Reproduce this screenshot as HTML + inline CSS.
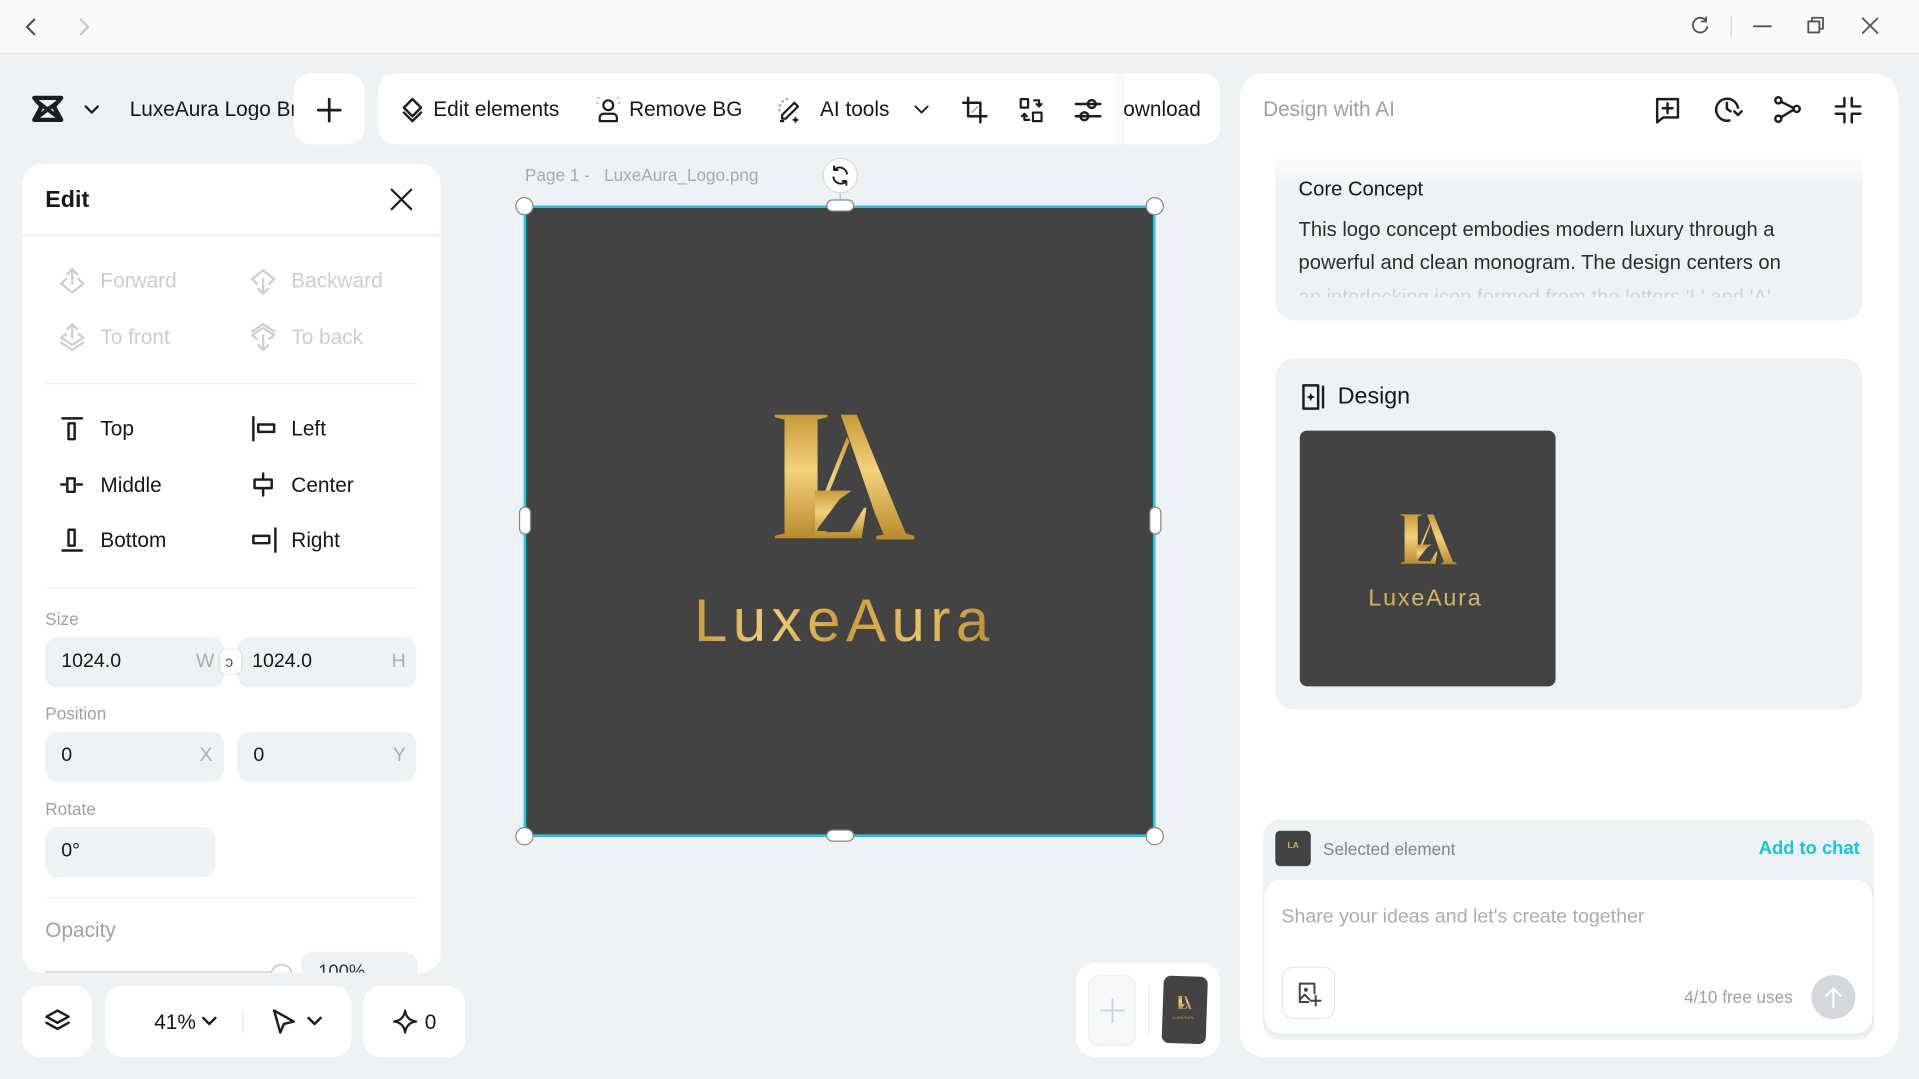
<!DOCTYPE html>
<html><head><meta charset="utf-8">
<style>
*{box-sizing:border-box;margin:0;padding:0}
html,body{width:1919px;height:1079px;overflow:hidden;background:#eef2f5;font-family:"Liberation Sans",sans-serif;color:#15171a}
#s{position:absolute;left:0;top:0;width:1568px;height:882px;transform:scale(1.2239,1.2234);transform-origin:0 0;background:#eef2f5}
.a{position:absolute}
.w{position:absolute;background:#fff}
.t{position:absolute;white-space:nowrap;line-height:1}
svg{position:absolute;overflow:visible}
.ic{fill:none;stroke:#1b1d20;stroke-width:1.8;stroke-linecap:round;stroke-linejoin:round}
.g{color:#c9ced4}
.inp{position:absolute;background:#eef2f5;border-radius:10px;height:41px}
.lbl{position:absolute;font-size:14px;color:#9aa1a9}
</style></head><body><div id="s">
<!-- title bar -->
<div class="a" style="left:0;top:0;width:1568px;height:44px;background:#f9f9fa;border-bottom:1px solid #e4e6e9"></div>
<svg style="left:19px;top:14px" width="14" height="16"><path class="ic" d="M9 2L3 8l6 6" style="stroke:#555"/></svg>
<svg style="left:62px;top:14px" width="14" height="16"><path class="ic" d="M4 2l6 6-6 6" style="stroke:#c7c9cc"/></svg>
<svg style="left:1381px;top:13px" width="16" height="16"><path class="ic" d="M13 4A6 6 0 1 0 14 9M13 1v3.5h-3.5" style="stroke:#555;stroke-width:1.5"/></svg>
<div class="a" style="left:1414px;top:13px;width:1px;height:17px;background:#d4d6d9"></div>
<svg style="left:1432px;top:20px" width="16" height="4"><path class="ic" d="M1 1.5h14" style="stroke:#555;stroke-width:1.5"/></svg>
<svg style="left:1476px;top:13px" width="16" height="16"><path class="ic" d="M1.5 4.5h9v9h-9zM4.5 4.5V1.5h9v9h-3" style="stroke:#555;stroke-width:1.5"/></svg>
<svg style="left:1521px;top:14px" width="14" height="14"><path class="ic" d="M1 1l12 12M13 1L1 13" style="stroke:#555;stroke-width:1.5"/></svg>

<!-- top left header -->
<div class="a" style="left:10px;top:60px;width:290px;height:58px;border-radius:14px;background:#eef2f5"></div>
<svg style="left:26px;top:78px" width="26" height="24"><path d="M2 2h22l-6 7 6 11H2l6-11z" fill="none" stroke="#1b1d20" stroke-width="3.5" stroke-linejoin="round"/><path d="M3 4l20 15M23 4L3 19" stroke="#1b1d20" stroke-width="3.2"/></svg>
<svg style="left:69px;top:86px" width="12" height="8"><path class="ic" d="M1 1l5 5 5-5"/></svg>
<div class="t" style="left:106px;top:81px;font-size:17px;width:134px;overflow:hidden">LuxeAura Logo Brand</div>
<div class="w" style="left:240px;top:60px;width:58px;height:58px;border-radius:14px"></div>
<svg style="left:259px;top:80px" width="20" height="20"><path class="ic" d="M10 1v18M1 10h18" style="stroke-width:2.2"/></svg>

<!-- toolbar -->
<div class="w" style="left:309px;top:60px;width:688px;height:58px;border-radius:14px"></div>
<svg style="left:327px;top:79px" width="20" height="22"><path class="ic" d="M10 2l7 7-7 7-7-7zM3 13l7 7 7-7" style="stroke-width:2"/></svg>
<div class="t" style="left:354px;top:81px;font-size:17px">Edit elements</div>
<svg style="left:487px;top:79px" width="20" height="22"><circle cx="10" cy="7" r="4" class="ic"/><path class="ic" d="M3 20v-3a3 3 0 0 1 3-3h8a3 3 0 0 1 3 3v3z"/><path d="M1 1h2M17 1h2M1 4v2M19 4v2" stroke="#bfc6ce" stroke-width="1.5"/></svg>
<div class="t" style="left:514px;top:81px;font-size:17px">Remove BG</div>
<svg style="left:633px;top:79px" width="22" height="22"><path d="M4 12a8 8 0 0 1 9-10" fill="none" stroke="#999" stroke-width="1.5" stroke-dasharray="2 2"/><path class="ic" d="M16 5l3 3-10 10H6v-3z M5 20l2 0"/><path d="M17 16l1 2 2 1-2 1-1 2-1-2-2-1 2-1z" fill="#1b1d20"/></svg>
<div class="t" style="left:670px;top:81px;font-size:17px">AI tools</div>
<svg style="left:747px;top:86px" width="12" height="8"><path class="ic" d="M1 1l5 5 5-5" style="stroke-width:1.5"/></svg>
<svg style="left:786px;top:79px" width="20" height="22"><path class="ic" d="M5 1v15h15M1 5h14v16" style="stroke-width:2"/><path d="M8 13l5-5" stroke="#999" stroke-width="1"/></svg>
<svg style="left:832px;top:79px" width="22" height="22"><path class="ic" d="M2 2h6v7H2zM12 13h7v7h-7zM13 3h4v5m-2-2l2 2 2-2M9 19H5v-5m-2 2l2-2 2 2" style="stroke-width:1.8"/></svg>
<svg style="left:877px;top:79px" width="24" height="22"><path class="ic" d="M2 6h20M2 16h20" style="stroke-width:2"/><circle cx="15" cy="6" r="3.2" fill="#fff" class="ic" style="stroke-width:2"/><circle cx="9" cy="16" r="3.2" fill="#fff" class="ic" style="stroke-width:2"/></svg>
<div class="a" style="left:908px;top:60px;width:10px;height:58px;background:linear-gradient(90deg,rgba(0,0,0,0),rgba(0,0,0,.03))"></div>
<div class="t" style="left:918px;top:81px;font-size:17px;width:63px;overflow:hidden;direction:rtl">Download</div>

<!-- edit panel -->
<div class="w" style="left:18px;top:134px;width:342px;height:661px;border-radius:16px;overflow:hidden">
 <div class="a" style="left:0;top:58px;width:342px;height:1px;background:#eceef1"></div>
 <div class="a" style="left:19px;top:179px;width:304px;height:1px;background:#eceef1"></div>
 <div class="a" style="left:19px;top:346px;width:304px;height:1px;background:#eceef1"></div>
 <div class="a" style="left:19px;top:599px;width:304px;height:1px;background:#eceef1"></div>
 <div class="a" style="left:19px;top:660px;width:194px;height:1.5px;background:#c9ced4"></div>
 <div class="a" style="left:203px;top:654px;width:18px;height:18px;border-radius:50%;border:1.5px solid #b9bec5;background:#fff"></div>
 <div class="a" style="left:228px;top:644px;width:95px;height:40px;border-radius:10px;background:#eef2f5"></div>
 <div class="t" style="left:242px;top:653px;font-size:15px;color:#333">100%</div>
</div>
<div class="t" style="left:37px;top:154px;font-size:19px;font-weight:bold">Edit</div>
<svg style="left:319px;top:154px" width="18" height="18"><path class="ic" d="M1 1l16 16M17 1L1 17"/></svg>

<svg style="left:49px;top:219px" width="20" height="22"><path class="ic" d="M10 1v12M6 5l4-4 4 4M5 9l-4 4 9 7 9-7-4-4" style="stroke:#c9ced4"/></svg>
<div class="t g" style="left:82px;top:221px;font-size:17px">Forward</div>
<svg style="left:205px;top:219px" width="20" height="22"><path class="ic" d="M10 9v12M6 17l4 4 4-4M5 13l-4-4 9-7 9 7-4 4" style="stroke:#c9ced4"/></svg>
<div class="t g" style="left:238px;top:221px;font-size:17px">Backward</div>
<svg style="left:49px;top:264px" width="20" height="22"><path class="ic" d="M10 1v11M6 5l4-4 4 4M5 9l-4 3 9 6 9-6-4-3M1 16l9 6 9-6" style="stroke:#c9ced4"/></svg>
<div class="t g" style="left:82px;top:267px;font-size:17px">To front</div>
<svg style="left:205px;top:264px" width="20" height="22"><path class="ic" d="M10 10v12M6 18l4 4 4-4M1 7l9-6 9 6M5 13l-4-3 9-6 9 6-4 3" style="stroke:#c9ced4"/></svg>
<div class="t g" style="left:238px;top:267px;font-size:17px">To back</div>

<svg style="left:50px;top:341px" width="20" height="20"><path class="ic" d="M1 1h16M6 5h5v13H6z" style="stroke-width:2"/></svg>
<div class="t" style="left:82px;top:342px;font-size:17px">Top</div>
<svg style="left:49px;top:387px" width="20" height="20"><path class="ic" d="M1 9h4M14 9h4M6 4h6v11H6z" style="stroke-width:2"/></svg>
<div class="t" style="left:82px;top:388px;font-size:17px">Middle</div>
<svg style="left:50px;top:432px" width="20" height="20"><path class="ic" d="M1 18h16M6 1h5v13H6z" style="stroke-width:2"/></svg>
<div class="t" style="left:82px;top:433px;font-size:17px">Bottom</div>
<svg style="left:205px;top:340px" width="22" height="22"><path class="ic" d="M2 1v19M6 7h13v6H6z" style="stroke-width:2"/></svg>
<div class="t" style="left:238px;top:342px;font-size:17px">Left</div>
<svg style="left:205px;top:386px" width="22" height="22"><path class="ic" d="M10 1v5M10 14v5M3 6h14v7H3z" style="stroke-width:2"/></svg>
<div class="t" style="left:238px;top:388px;font-size:17px">Center</div>
<svg style="left:205px;top:431px" width="22" height="22"><path class="ic" d="M20 1v19M2 7h13v6H2z" style="stroke-width:2"/></svg>
<div class="t" style="left:238px;top:433px;font-size:17px">Right</div>

<div class="lbl" style="left:37px;top:498px">Size</div>
<div class="inp" style="left:37px;top:521px;width:146px"></div>
<div class="t" style="left:50px;top:533px;font-size:16px">1024.0</div>
<div class="t" style="left:160px;top:533px;font-size:16px;color:#a9afb6">W</div>
<div class="inp" style="left:194px;top:521px;width:146px"></div>
<div class="t" style="left:206px;top:533px;font-size:16px">1024.0</div>
<div class="t" style="left:320px;top:533px;font-size:16px;color:#a9afb6">H</div>
<div class="a" style="left:180px;top:531px;width:17px;height:20px;background:#fff;border-radius:5px;box-shadow:0 0 2px rgba(0,0,0,.15)"></div>
<div class="t" style="left:184px;top:534px;font-size:13px;color:#555">ᴐ</div>
<div class="lbl" style="left:37px;top:575px">Position</div>
<div class="inp" style="left:37px;top:598px;width:146px"></div>
<div class="t" style="left:50px;top:610px;font-size:16px">0</div>
<div class="t" style="left:163px;top:610px;font-size:16px;color:#a9afb6">X</div>
<div class="inp" style="left:194px;top:598px;width:146px"></div>
<div class="t" style="left:207px;top:610px;font-size:16px">0</div>
<div class="t" style="left:321px;top:610px;font-size:16px;color:#a9afb6">Y</div>
<div class="lbl" style="left:37px;top:653px">Rotate</div>
<div class="inp" style="left:37px;top:676px;width:139px"></div>
<div class="t" style="left:50px;top:688px;font-size:16px">0°</div>
<div class="t" style="left:37px;top:752px;font-size:17px;color:#9aa1a9">Opacity</div>

<!-- bottom left bar -->
<div class="w" style="left:18px;top:806px;width:57px;height:58px;border-radius:14px"></div>
<svg style="left:36px;top:825px" width="22" height="20"><path class="ic" d="M11 1l9 5-9 5-9-5zM2 11l9 5 9-5" style="stroke-width:2"/></svg>
<div class="w" style="left:86px;top:806px;width:201px;height:58px;border-radius:14px"></div>
<div class="t" style="left:126px;top:827px;font-size:17px">41%</div>
<svg style="left:165px;top:831px" width="12" height="8"><path class="ic" d="M1 1l5 5 5-5" style="stroke-width:2"/></svg>
<div class="a" style="left:198px;top:826px;width:1px;height:18px;background:#e4e6e9"></div>
<svg style="left:222px;top:824px" width="20" height="22"><path class="ic" d="M2 2l16 9-8 2-3 7z" style="stroke-width:2"/></svg>
<svg style="left:251px;top:831px" width="12" height="8"><path class="ic" d="M1 1l5 5 5-5" style="stroke-width:2"/></svg>
<div class="w" style="left:297px;top:806px;width:83px;height:58px;border-radius:14px"></div>
<svg style="left:321px;top:825px" width="20" height="20"><path d="M10 1Q11 9 19 10Q11 11 10 19Q9 11 1 10Q9 9 10 1z" class="ic" style="stroke-width:1.8"/></svg>
<div class="t" style="left:347px;top:827px;font-size:17px">0</div>

<!-- canvas -->
<div class="t" style="left:429px;top:136px;font-size:14px;color:#a5abb2">Page 1 -&nbsp;&nbsp; LuxeAura_Logo.png</div>
<div class="a" style="left:672px;top:129px;width:29px;height:29px;border-radius:50%;background:#fff;border:1.5px solid #d8dce0"></div>
<svg style="left:678px;top:135px" width="17" height="17"><path class="ic" d="M14 7a6 6 0 0 0-10.5-3M3 10a6 6 0 0 0 10.5 3M3.5 1v3h3M13.5 16v-3h-3" style="stroke-width:1.6"/></svg>
<div class="a" style="left:686px;top:158px;width:1px;height:10px;background:#b9bec5"></div>
<div class="a" style="left:428px;top:168px;width:516px;height:516px;background:#434343;border:2px solid #1ec8e2"></div>
<svg style="left:632px;top:339px" width="115" height="103" viewBox="0 0 115 103">
<defs><linearGradient id="gd" x1="0" y1="0" x2="0" y2="1"><stop offset="0" stop-color="#c99a3a"/><stop offset=".45" stop-color="#f2d27a"/><stop offset="1" stop-color="#b98a2e"/></linearGradient></defs>
<g fill="url(#gd)">
<path d="M1 0h43v2l-8 2v91h8l-8 6H1v-2l8-2V4l-8-2z"/>
<path d="M55 0h13l40 97 7 2v3H84v-3l6-1-7-17z"/>
<path d="M60 18l2 4-29 73h-4z"/>
<path d="M34 62h30l-10 7-20 27h28l12-20h2l-4 25H34z"/>
</g></svg>
<div class="t" style="left:567px;top:484px;font-size:49px;letter-spacing:4.5px;background:linear-gradient(90deg,#c99a3a,#f0cf78,#c99a3a,#e7c36a,#b98a2e);-webkit-background-clip:text;background-clip:text;color:transparent">LuxeAura</div>
<!-- handles -->
<div class="a" style="left:421px;top:161px;width:15px;height:15px;border-radius:50%;background:#fff;border:1.5px solid #888"></div>
<div class="a" style="left:936px;top:161px;width:15px;height:15px;border-radius:50%;background:#fff;border:1.5px solid #888"></div>
<div class="a" style="left:421px;top:676px;width:15px;height:15px;border-radius:50%;background:#fff;border:1.5px solid #888"></div>
<div class="a" style="left:936px;top:676px;width:15px;height:15px;border-radius:50%;background:#fff;border:1.5px solid #888"></div>
<div class="a" style="left:675px;top:163px;width:23px;height:10px;border-radius:5px;background:#fff;border:1.5px solid #888"></div>
<div class="a" style="left:675px;top:678px;width:23px;height:10px;border-radius:5px;background:#fff;border:1.5px solid #888"></div>
<div class="a" style="left:424px;top:414px;width:10px;height:23px;border-radius:5px;background:#fff;border:1.5px solid #888"></div>
<div class="a" style="left:939px;top:414px;width:10px;height:23px;border-radius:5px;background:#fff;border:1.5px solid #888"></div>

<!-- pages widget -->
<div class="w" style="left:879px;top:787px;width:118px;height:77px;border-radius:16px"></div>
<div class="a" style="left:889px;top:797px;width:39px;height:58px;border-radius:9px;background:#f6f8fa;border:1px solid #eceef1"></div>
<svg style="left:898px;top:815px" width="22" height="22"><path d="M11 1v20M1 11h20" stroke="#ced3d8" stroke-width="1.5"/></svg>
<div class="a" style="left:938px;top:805px;width:1px;height:40px;background:#eceef1"></div>
<div class="a" style="left:950px;top:798px;width:36px;height:55px;border-radius:6px;background:#434343;transform:rotate(2deg)"></div>
<svg style="left:962px;top:814px" width="12" height="11" viewBox="0 0 115 103"><g fill="url(#gd)"><path d="M1 0h43v2l-8 2v91h8l-8 6H1v-2l8-2V4l-8-2z"/><path d="M55 0h13l40 97 7 2v3H84v-3l6-1-7-17z"/><path d="M34 62h30l-10 7-20 27h28l12-20h2l-4 25H34z"/></g></svg>
<div class="t" style="left:958px;top:830px;font-size:4px;color:#b8943f">LuxeAura</div>

<!-- right panel -->
<div class="w" style="left:1013px;top:60px;width:538px;height:804px;border-radius:20px"></div>
<div class="t" style="left:1032px;top:81px;font-size:17px;color:#9aa1a9">Design with AI</div>
<svg style="left:1351px;top:78px" width="24" height="24"><path class="ic" d="M3 3h17v15H8l-5 4zM11.5 6.5v8M7.5 10.5h8" style="stroke-width:2"/></svg>
<svg style="left:1400px;top:78px" width="24" height="24"><path class="ic" d="M20 10A9 9 0 1 0 13 20.5M11 6v5l3 2M17 13l3 3 3-3" style="stroke-width:2"/></svg>
<svg style="left:1449px;top:78px" width="24" height="24"><circle cx="4" cy="4" r="2.5" class="ic" style="stroke-width:2"/><circle cx="4" cy="19" r="2.5" class="ic" style="stroke-width:2"/><circle cx="19" cy="11" r="2.5" class="ic" style="stroke-width:2"/><path class="ic" d="M6 5l10 5M6 18l10-6" style="stroke-width:2"/></svg>
<svg style="left:1499px;top:79px" width="22" height="22"><path class="ic" d="M8 1v7H1M14 1v7h7M8 21v-7H1M14 21v-7h7" style="stroke-width:2"/></svg>

<div class="a" style="left:1042px;top:125px;width:480px;height:137px;border-radius:0 0 16px 16px;background:linear-gradient(180deg,#fff 0,#eef2f5 30px,#eef2f5 100%)"></div>
<div class="t" style="left:1061px;top:147px;font-size:16.5px">Core Concept</div>
<div class="t" style="left:1061px;top:180px;font-size:16.5px;color:#2a2d31">This logo concept embodies modern luxury through a</div>
<div class="t" style="left:1061px;top:207px;font-size:16.5px;color:#2a2d31">powerful and clean monogram. The design centers on</div>
<div class="a" style="left:1042px;top:234px;width:480px;height:9px;overflow:hidden"><div class="t" style="left:19px;top:1px;font-size:16.5px;color:#cfd4d9">an interlocking icon formed from the letters 'L' and 'A'</div></div>

<div class="a" style="left:1042px;top:293px;width:480px;height:287px;border-radius:16px;background:#eef2f5"></div>
<svg style="left:1063px;top:314px" width="22" height="22"><path class="ic" d="M2 1h12v19H2zM18 2v17" style="stroke-width:2"/><path d="M8 7l1 2.5 2.5 1L9 11.5 8 14l-1-2.5L4.5 10.5 7 9.5z" fill="#1b1d20"/></svg>
<div class="t" style="left:1093px;top:315px;font-size:19px">Design</div>
<div class="a" style="left:1062px;top:352px;width:209px;height:209px;border-radius:6px;background:#434343"></div>
<svg style="left:1144px;top:420px" width="46" height="42" viewBox="0 0 115 103"><g fill="url(#gd)">
<path d="M1 0h43v2l-8 2v91h8l-8 6H1v-2l8-2V4l-8-2z"/><path d="M55 0h13l40 97 7 2v3H84v-3l6-1-7-17z"/><path d="M60 18l2 4-29 73h-4z"/><path d="M34 62h30l-10 7-20 27h28l12-20h2l-4 25H34z"/></g></svg>
<div class="t" style="left:1118px;top:480px;font-size:19px;letter-spacing:1.5px;color:#d9b45e">LuxeAura</div>

<div class="a" style="left:1032px;top:670px;width:499px;height:180px;border-radius:14px;background:#eef2f5"></div>
<div class="a" style="left:1042px;top:679px;width:29px;height:29px;border-radius:4px;background:#434343"></div>
<div class="t" style="left:1052px;top:688px;font-size:7px;color:#d4ad55;font-weight:bold">LA</div>
<div class="t" style="left:1081px;top:687px;font-size:14px;color:#7f868e">Selected element</div>
<div class="t" style="left:1437px;top:686px;font-size:15px;color:#17c4de;font-weight:bold">Add to chat</div>
<div class="w" style="left:1033px;top:719px;width:497px;height:126px;border-radius:14px;box-shadow:0 1px 4px rgba(0,0,0,.06)"></div>
<div class="t" style="left:1047px;top:742px;font-size:16px;color:#a7adb4">Share your ideas and let's create together</div>
<div class="a" style="left:1047px;top:790px;width:44px;height:43px;border-radius:10px;border:1px solid #e4e7ea;background:#fff"></div>
<svg style="left:1060px;top:803px" width="20" height="20"><path class="ic" d="M13 1H2v15h7M14 1v8" style="stroke:#444;stroke-width:1.6"/><circle cx="7" cy="6" r="1.6" fill="#444"/><path class="ic" d="M2 14l4-4 4 4M15 11v8M11 15h8" style="stroke:#444;stroke-width:1.6"/></svg>
<div class="t" style="left:1376px;top:808px;font-size:14px;color:#9aa1a9">4/10 free uses</div>
<div class="a" style="left:1480px;top:797px;width:36px;height:36px;border-radius:50%;background:#d3d8de"></div>
<svg style="left:1490px;top:806px" width="16" height="18"><path d="M8 17V2M2 8l6-6 6 6" fill="none" stroke="#fff" stroke-width="1.8" stroke-linecap="round" stroke-linejoin="round"/></svg>
</div></body></html>
